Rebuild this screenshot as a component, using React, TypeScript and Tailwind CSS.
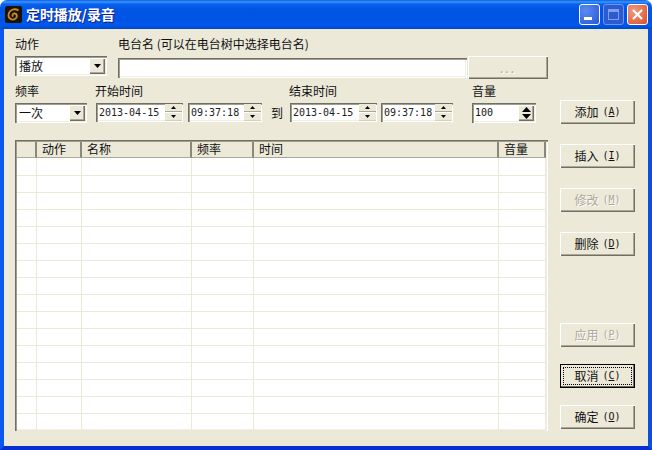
import type { ReactNode } from "react";

const cjk = "font-['Noto_Sans_CJK_SC','Liberation_Sans',sans-serif]";
const num = "font-['DejaVu_Sans_Mono','Liberation_Mono',monospace]";
const sunken = "shadow-[inset_1px_1px_0_#716f64,inset_2px_2px_0_#a09e90,inset_-1px_-1px_0_#ffffff,inset_-2px_-2px_0_#f1efe2]";
const raised = "shadow-[inset_1px_1px_0_#ffffff,inset_-1px_-1px_0_#716f64,inset_-2px_-2px_0_#aca899]";

const columns = [
  { title: "", w: "w-[20px]" },
  { title: "动作", w: "w-[45px]" },
  { title: "名称", w: "w-[110px]" },
  { title: "频率", w: "w-[62px]" },
  { title: "时间", w: "w-[245px]" },
  { title: "音量", w: "w-[47px]" },
];

function Label({ children, className = "" }: { children: ReactNode; className?: string }) {
  return <div className={`h-[16px] text-[12px] leading-[16px] text-[#111] ${className}`}>{children}</div>;
}

function Arrow({ down = false, bold = false }: { down?: boolean; bold?: boolean }) {
  const w = bold ? 9 : 5;
  const h = bold ? 5 : 3;
  return (
    <svg width={w} height={h} viewBox={`0 0 ${w} ${h}`}>
      <polygon points={down ? `0,0 ${w},0 ${w / 2},${h}` : `0,${h} ${w},${h} ${w / 2},0`} fill="#000" />
    </svg>
  );
}

function Combo({ text, w }: { text: string; w: string }) {
  return (
    <div className={`${w} h-[20px] ${sunken} bg-white flex items-center justify-between pl-[4px] pr-[2px] text-[12px]`}>
      <span className="leading-none text-[#111]">{text}</span>
      <div className={`w-[16px] h-[16px] bg-[#ece9d8] ${raised} flex items-center justify-center`}>
        <svg width="7" height="4" viewBox="0 0 7 4">
          <polygon points="0,0 7,0 3.500,4" fill="#000" />
        </svg>
      </div>
    </div>
  );
}

function SpinField({ value, w }: { value: string; w: string }) {
  return (
    <div className={`${w} h-[19px] ${sunken} bg-white flex items-center justify-between pl-[3px] pr-[1px]`}>
      <span className={`${num} text-[10px] leading-none text-[#222]`}>{value}</span>
      <div className="w-[17px] h-[17px] flex flex-col gap-[1px]">
        <div className="flex-1 bg-[#ece9d8] border-b border-[#aca899] flex items-center justify-center">
          <Arrow />
        </div>
        <div className="flex-1 bg-[#ece9d8] border-b border-[#d4d0c0] flex items-center justify-center">
          <Arrow down />
        </div>
      </div>
    </div>
  );
}

function Btn({ label, k, disabled, focused, className = "" }: { label: string; k: string; disabled?: boolean; focused?: boolean; className?: string }) {
  const look = focused
    ? "border border-black shadow-[inset_-1px_-1px_0_#716f64]"
    : raised;
  return (
    <button className={`w-[75px] h-[24px] shrink-0 bg-[#ece9d8] ${look} flex items-center justify-center text-[12px] leading-none p-[2px] ${disabled ? "text-[#aca899] [text-shadow:1px_1px_0_#fff]" : "text-[#111]"} ${className}`}>
      <span className={`flex items-center justify-center w-full h-full ${focused ? "border border-dotted border-black" : ""}`}>
        {label}
        <span className={`${num} text-[10px] ml-[4px]`}>
          (<u>{k}</u>)
        </span>
      </span>
    </button>
  );
}

export default function App() {
  const rows = Array.from({ length: 16 });

  return (
    <div className={`w-[652px] h-[450px] flex flex-col bg-white ${cjk}`}>
      {/* title bar */}
      <div className="h-[29px] shrink-0 rounded-t-[7px] bg-[linear-gradient(180deg,#0a5fe0_0px,#3c96ff_2px,#0a62ee_4px,#0055e5_9px,#0054e3_20px,#0058ee_25px,#0046c8_29px)] flex items-center pl-[5px] pr-[4px]">
        <svg width="17" height="17" viewBox="0 0 17 17">
          <rect width="17" height="17" rx="2" fill="#1a1208" />
          <path d="M13.500 4.500C10 2 4 3.500 3.500 9c-.3 3.500 3.500 5.500 6.500 4 2.500-1.300 2.500-5-.3-5.500-2-.3-3 2-1.500 3" fill="none" stroke="#c98a1e" strokeWidth="1.800" />
        </svg>
        <span className="ml-[4px] text-[14px] font-bold text-white tracking-[-0.1px] [text-shadow:1px_1px_0_#0f1e8a]">定时播放/录音</span>
        <div className="ml-auto flex items-center gap-[3px]">
          <div className="w-[21px] h-[21px] rounded-[3px] border border-white bg-[radial-gradient(circle_at_30%_30%,#5a8cf0,#2a55d8)] flex items-end pl-[4px] pb-[4px]">
            <div className="w-[8px] h-[3px] bg-white" />
          </div>
          <div className="w-[21px] h-[21px] rounded-[3px] border border-[#6f94ea] bg-[#2c5ad2] flex items-center justify-center">
            <div className="w-[11px] h-[11px] border border-[#7f9fe8] border-t-[3px]" />
          </div>
          <div className="w-[21px] h-[21px] rounded-[3px] border border-white bg-[radial-gradient(circle_at_30%_30%,#f09a80,#dd4f26)] flex items-center justify-center">
            <svg width="13" height="13" viewBox="0 0 13 13">
              <path d="M2 2l9 9M11 2l-9 9" stroke="#fff" strokeWidth="2.200" />
            </svg>
          </div>
        </div>
      </div>

      {/* client area */}
      <div className="flex-1 min-h-0 flex bg-[#ece9d8] border-l-4 border-r-4 border-b-4 border-l-[#0a58ee] border-r-[#0a4fe0] border-b-[#0a2fd0] pl-[11px]">
        <div className="w-[533px] flex flex-col pt-[7px]">
          <div className="flex">
            <div className="w-[103px]">
              <Label className="mb-[4px]">动作</Label>
              <Combo text="播放" w="w-[92px]" />
            </div>
            <div className="flex-1">
              <Label className="mb-[4px]">电台名 (可以在电台树中选择电台名)</Label>
              <div className="flex items-center">
                <div className={`w-[349px] h-[20px] bg-white ${sunken}`} />
                <button className={`w-[80px] h-[23px] ml-[1px] bg-[#ece9d8] ${raised} text-[12px] tracking-[2px] text-[#aca899] [text-shadow:1px_1px_0_#fff] leading-none`}>...</button>
              </div>
            </div>
          </div>

          <div className="flex mt-[4px]">
            <div className="w-[80px]">
              <Label className="mb-[4px]">频率</Label>
              <Combo text="一次" w="w-[72px]" />
            </div>
            <div className="w-[194px]">
              <Label className="mb-[4px]">开始时间</Label>
              <div className="flex items-center gap-[5px] pl-[1px]">
                <SpinField value="2013-04-15" w="w-[87px]" />
                <SpinField value="09:37:18" w="w-[74px]" />
                <span className="ml-[4px] text-[12px] leading-none text-[#111]">到</span>
              </div>
            </div>
            <div className="w-[183px]">
              <Label className="mb-[4px]">结束时间</Label>
              <div className="flex items-center gap-[4px] pl-[1px]">
                <SpinField value="2013-04-15" w="w-[87px]" />
                <SpinField value="09:37:18" w="w-[72px]" />
              </div>
            </div>
            <div className="w-[64px]">
              <Label className="mb-[4px]">音量</Label>
              <div className={`w-[64px] h-[20px] ${sunken} bg-white flex items-center justify-between pl-[3px] pr-[2px]`}>
                <span className={`${num} text-[10px] leading-none text-[#111]`}>100</span>
                <div className={`w-[16px] h-[16px] bg-[#ece9d8] flex flex-col items-center justify-center gap-[2px] ${raised}`}>
                  <Arrow bold />
                  <Arrow down bold />
                </div>
              </div>
            </div>
          </div>

          {/* list */}
          <div className={`mt-[17px] h-[291px] overflow-hidden bg-white ${sunken} p-[2px]`}>
            <div className="flex h-[16px] bg-[#ece9d8]">
              {columns.map((c, i) => (
                <div key={i} className={`${c.w} shrink-0 h-full border-r-2 border-r-[#8a8878] border-b border-b-[#aca899] pl-[5px] text-[12px] leading-[14px] text-[#111]`}>
                  {c.title}
                </div>
              ))}
            </div>
            {rows.map((_, r) => (
              <div key={r} className={`flex ${r === 0 ? "h-[18px]" : "h-[17px]"}`}>
                {columns.map((c, i) => (
                  <div key={i} className={`${c.w} shrink-0 h-full border-r border-b border-[#ece9d8]`} />
                ))}
              </div>
            ))}
          </div>
        </div>

        {/* buttons */}
        <div className="ml-[12px] flex flex-col pt-[71px]">
          <Btn label="添加" k="A" />
          <Btn label="插入" k="I" className="mt-[20px]" />
          <Btn label="修改" k="M" disabled className="mt-[20px]" />
          <Btn label="删除" k="D" className="mt-[20px]" />
          <Btn label="应用" k="P" disabled className="mt-[67px]" />
          <Btn label="取消" k="C" focused className="mt-[17px]" />
          <Btn label="确定" k="O" className="mt-[17px]" />
        </div>
      </div>
    </div>
  );
}
